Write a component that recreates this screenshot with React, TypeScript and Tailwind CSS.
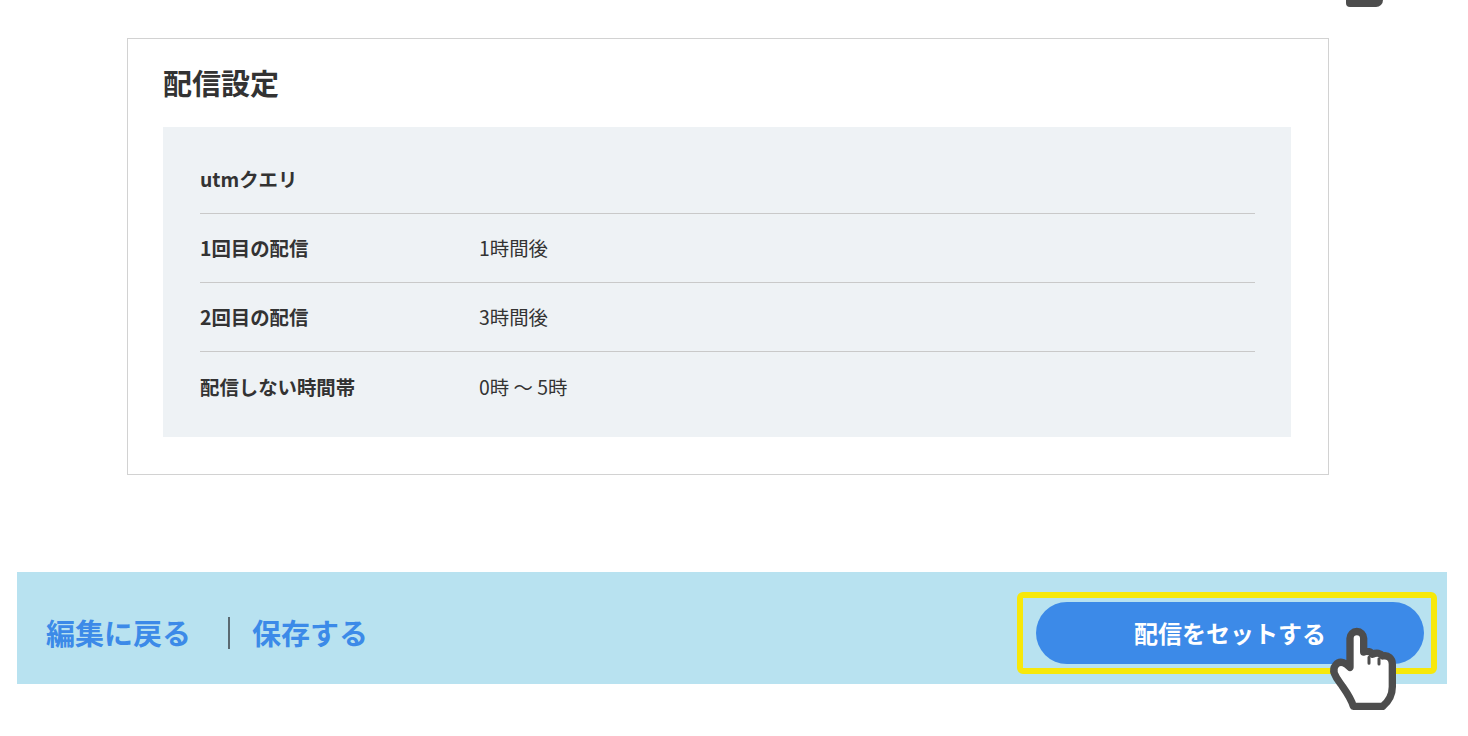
const rows = [
    { label: 'utmクエリ', value: '' },
    { label: '1回目の配信', value: '1時間後' },
    { label: '2回目の配信', value: '3時間後' },
    { label: '配信しない時間帯', value: '0時 ～ 5時' },
]

const HandCursor = ({ className }: { className: string }) => (
    <svg viewBox="0 0 240 285" className={className}>
        <path
            d="M90 55 A20.5 20.5 0 0 1 131 55 L131 96 C143 92 152 95 158 103 C170 97 182 100 188 108 C205 104 217 116 217 132 L217 200 C217 228 206 244 188 259 L100 259 C94 238 82 220 68 200 C60 188 50 178 43 160 C36 142 52 122 70 128 C78 131 84 136 90 142 Z"
            fill="#ffffff"
            stroke="#4d4d4d"
            strokeWidth="22"
            strokeLinejoin="round"
        />
        <path d="M147 112 L147 130 M177 116 L177 132" stroke="#4d4d4d" strokeWidth="9" strokeLinecap="round" fill="none" />
    </svg>
)

const App = () => {
    return (
        <div className="relative h-[736px] w-[1468px] overflow-hidden bg-white font-['Noto_Sans_CJK_JP',sans-serif] text-[#333333]">
            <div className="absolute left-[1346px] top-0 h-[7px] w-[37px] rounded-bl-[8px] rounded-br-[14px] bg-[#4d4d4d]" />

            <div className="pt-[38px] pl-[127px]">
                <section className="h-[437px] w-[1202px] border border-[#d2d2d2] pl-[35px] pr-[37px]">
                    <h2 className="pt-[22px] text-[29px] font-bold leading-[42px]">配信設定</h2>
                    <div className="mt-[24px] h-[310px] bg-[#eef2f5] pl-[37px] pr-[36px] pt-[18px]">
                        {rows.map((row, index) => (
                            <div
                                key={row.label}
                                className={`flex h-[69px] items-center text-[19.4px] ${index < 3 ? 'border-b border-[#c9c9c9]' : ''}`}
                            >
                                <div className="w-[279px] font-bold">{row.label}</div>
                                <div>{row.value}</div>
                            </div>
                        ))}
                    </div>
                </section>
            </div>

            <div className="ml-[17px] mt-[97px] flex h-[112px] w-[1430px] items-center justify-between bg-[#b8e2f0] pl-[29px] pr-[10px] pt-[10px]">
                <div className="flex items-center text-[29px] font-bold text-[#3c8ae8]">
                    <span>編集に戻る</span>
                    <span className="ml-[37px] mr-[22px] h-[32px] w-[2px] bg-[#5a6a72]" />
                    <span>保存する</span>
                </div>
                <div className="flex h-[82px] w-[420px] items-center justify-end rounded-[6px] border-[6px] border-[#f7e80a] pr-[7px]">
                    <button className="h-[62px] w-[388px] rounded-full bg-[#3c8ae8] text-[24px] font-bold text-white">
                        配信をセットする
                    </button>
                </div>
            </div>

            <HandCursor className="absolute left-[1320px] top-[620px] h-[95px] w-[80px]" />
        </div>
    )
}

export default App
